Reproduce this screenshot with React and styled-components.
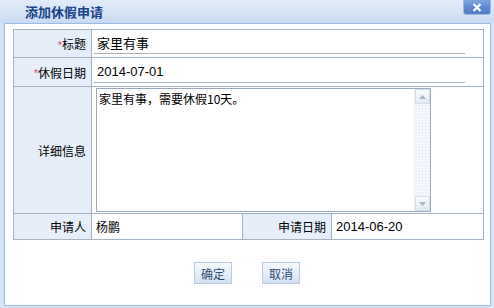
import React from "react";
import styled, { createGlobalStyle } from "styled-components";

const GlobalStyle = createGlobalStyle`
  html, body {
    margin: 0;
    padding: 0;
    background: #d6e3f4;
  }
  body {
    font-family: "Liberation Sans", "Noto Sans CJK SC", sans-serif;
    font-size: 12px;
  }
`;

const Window = styled.div`
  width: 494px;
  height: 308px;
  display: flex;
  flex-direction: column;
  background: linear-gradient(to bottom, #dbe7f7 0px, #cfdff3 22px, #d6e3f4 22px);
  overflow: hidden;
`;

const TitleBar = styled.div`
  height: 23px;
  display: flex;
  align-items: flex-start;
  justify-content: space-between;
  background: linear-gradient(to bottom, #e2ecf9 0%, #d3e2f5 60%, #c7daf2 100%);
  padding: 0 3px 0 25px;
  box-sizing: border-box;
`;

const Title = styled.span`
  margin-top: 4px;
  font-family: "Noto Sans CJK SC", sans-serif;
  font-size: 13px;
  font-weight: bold;
  line-height: 15px;
  color: #15428b;
`;

const CloseButton = styled.div`
  width: 28px;
  height: 15px;
  box-sizing: border-box;
  border: 1px solid #9db8df;
  border-top: none;
  border-radius: 0 0 3px 3px;
  background: linear-gradient(to bottom, #7fa5dd 0%, #5b87cf 55%, #4f7cc6 100%);
  display: flex;
  align-items: center;
  justify-content: center;
`;

const Panel = styled.div`
  margin: 0 3px 2px 4px;
  height: 283px;
  box-sizing: border-box;
  border: 1px solid #99bbe8;
  background: #ffffff;
  padding: 5px 0 0 8px;
  display: flex;
  flex-direction: column;
`;

const FormGrid = styled.div`
  width: 471px;
  box-sizing: border-box;
  display: grid;
  grid-template-columns: 78px 151px 89px 152px;
  grid-template-rows: 28px 29px 127px 26px;
  border-top: 1px solid #a4b3c4;
  border-left: 1px solid #a4b3c4;
`;

const Cell = styled.div`
  box-sizing: border-box;
  border-right: 1px solid #a4b3c4;
  border-bottom: 1px solid #a4b3c4;
  grid-column: ${(p) => p.$span || "auto"};
  display: flex;
  align-items: center;
  min-width: 0;
`;

const LabelCell = styled(Cell)`
  justify-content: flex-end;
  padding-right: 5px;
  background: #e6eef9;
  font-family: "Noto Sans CJK SC", sans-serif;
  font-size: 12px;
  color: #000;
`;

const Required = styled.span`
  color: #e8456a;
  font-family: "Liberation Sans", sans-serif;
  font-size: 11px;
  align-self: flex-start;
  margin-top: 9px;
`;

const ValueCell = styled(Cell)`
  padding-left: 4px;
  font-size: 13px;
  color: #000;
  align-items: ${(p) => (p.$top ? "flex-start" : "center")};
`;

const LineInput = styled.div`
  width: 371px;
  height: 22px;
  margin-left: -2px;
  margin-top: ${(p) => p.$offset || 0}px;
  box-sizing: border-box;
  border-bottom: 1px solid #a9b2bb;
  padding-left: 3px;
  display: flex;
  align-items: center;
  font-size: 13px;
  color: #000;
`;

const TextBox = styled.div`
  width: 335px;
  height: 124px;
  margin-top: 1px;
  box-sizing: border-box;
  border: 1px solid #9aaabd;
  display: flex;
`;

const TextContent = styled.div`
  flex: 1;
  padding: 3px 2px;
  font-family: "Noto Sans CJK SC", sans-serif;
  font-size: 12px;
  line-height: 14px;
  color: #000;
`;

const Scroll = styled.div`
  width: 15px;
  display: flex;
  flex-direction: column;
  background: #f4f7fb;
  border-left: 1px solid #eef2f7;
`;

const ScrollArrow = styled.div`
  height: 15px;
  display: flex;
  align-items: center;
  justify-content: center;
  background: linear-gradient(to bottom, #f8fafd, #e3eaf3);
  border: 1px solid #d4dde8;
  box-sizing: border-box;
`;

const ScrollTrack = styled.div`
  flex: 1;
  background-image: radial-gradient(#dde5ef 0.8px, transparent 0.9px);
  background-size: 3px 3px;
`;

const ButtonRow = styled.div`
  width: 471px;
  display: flex;
  justify-content: center;
  gap: 30px;
  margin-top: 22px;
  padding-right: 3px;
  box-sizing: border-box;
`;

const Button = styled.div`
  width: 38px;
  height: 22px;
  box-sizing: border-box;
  border: 1px solid #b7c9df;
  background: linear-gradient(to bottom, #f6f9fd 0%, #e4edf8 55%, #d3e1f2 100%);
  display: flex;
  align-items: center;
  justify-content: center;
  font-family: "Noto Sans CJK SC", sans-serif;
  font-size: 12px;
  color: #2d4c72;
`;

const Arrow = ({ down }) => (
  <svg width="7" height="4" viewBox="0 0 7 4">
    <path d={down ? "M0 0 L7 0 L3.5 4 Z" : "M0 4 L7 4 L3.5 0 Z"} fill="#a7b6c7" />
  </svg>
);

const App = () => (
  <Window>
    <GlobalStyle />
    <TitleBar>
      <Title>添加休假申请</Title>
      <CloseButton>
        <svg width="10" height="9" viewBox="0 0 10 9">
          <path d="M1.5 1 L8.5 8 M8.5 1 L1.5 8" stroke="#ffffff" strokeWidth="2.2" />
        </svg>
      </CloseButton>
    </TitleBar>
    <Panel>
      <FormGrid>
        <LabelCell>
          <Required>*</Required>标题
        </LabelCell>
        <ValueCell $span="2 / 5">
          <LineInput $offset={-2}>
            <span style={{ fontFamily: "'Noto Sans CJK SC', sans-serif", fontSize: 13 }}>家里有事</span>
          </LineInput>
        </ValueCell>
        <LabelCell>
          <Required>*</Required>休假日期
        </LabelCell>
        <ValueCell $span="2 / 5">
          <LineInput $offset={0}>2014-07-01</LineInput>
        </ValueCell>
        <LabelCell>详细信息</LabelCell>
        <ValueCell $span="2 / 5" $top>
          <TextBox>
            <TextContent>家里有事，需要休假10天。</TextContent>
            <Scroll>
              <ScrollArrow>
                <Arrow />
              </ScrollArrow>
              <ScrollTrack />
              <ScrollArrow>
                <Arrow down />
              </ScrollArrow>
            </Scroll>
          </TextBox>
        </ValueCell>
        <LabelCell>申请人</LabelCell>
        <ValueCell>
          <span style={{ fontFamily: "'Noto Sans CJK SC', sans-serif", fontSize: 12 }}>杨鹏</span>
        </ValueCell>
        <LabelCell>申请日期</LabelCell>
        <ValueCell>2014-06-20</ValueCell>
      </FormGrid>
      <ButtonRow>
        <Button>确定</Button>
        <Button>取消</Button>
      </ButtonRow>
    </Panel>
  </Window>
);

export default App;
